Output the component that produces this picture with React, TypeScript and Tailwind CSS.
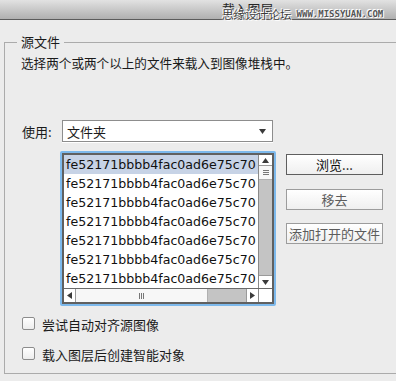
const ROWS = Array.from({ length: 7 }, () => 'fe52171bbbb4fac0ad6e75c70')

const Tri = ({ dir }: { dir: 'up' | 'down' | 'left' | 'right' }) => {
  const pts = {
    up: '0,5 7,5 3.5,0',
    down: '0,0 7,0 3.5,5',
    left: '5,0 5,7 0,3.5',
    right: '0,0 0,7 5,3.5',
  }[dir]
  const vertical = dir === 'up' || dir === 'down'
  return (
    <svg width={vertical ? 7 : 5} height={vertical ? 5 : 7} viewBox={vertical ? '0 0 7 5' : '0 0 5 7'}>
      <polygon points={pts} fill="#3a3a3a" />
    </svg>
  )
}

const VScroll = () => (
  <div className="flex w-[14px] flex-col border-l border-[#8a8a8a] bg-[#c4c4c4]">
    <div className="flex h-[11px] items-center justify-center border-b border-[#9a9a9a] bg-white">
      <Tri dir="up" />
    </div>
    <div className="flex h-[14px] items-center justify-center border-b border-[#b0b0b0] bg-[#f7f7f7]">
      <svg width="6" height="5" viewBox="0 0 6 5">
        <path d="M0 0.5H6M0 2.5H6M0 4.5H6" stroke="#777" strokeWidth="1" />
      </svg>
    </div>
    <div className="flex-1" />
    <div className="flex h-[13px] items-center justify-center border-t border-[#9a9a9a] bg-white">
      <Tri dir="down" />
    </div>
  </div>
)

const HScroll = () => (
  <div className="flex h-[14px] border-t border-[#6a6a6a] bg-[#c4c4c4]">
    <div className="flex w-[12px] items-center justify-center border-r border-[#9a9a9a] bg-white">
      <Tri dir="left" />
    </div>
    <div className="flex w-[132px] items-center justify-center border-r border-[#b0b0b0] bg-[#f7f7f7]">
      <svg width="5" height="6" viewBox="0 0 5 6">
        <path d="M0.5 0V6M2.5 0V6M4.5 0V6" stroke="#777" strokeWidth="1" />
      </svg>
    </div>
    <div className="flex-1" />
    <div className="flex w-[12px] items-center justify-center border-l border-[#9a9a9a] bg-white">
      <Tri dir="right" />
    </div>
    <div className="w-[14px] border-l border-[#8a8a8a] bg-white" />
  </div>
)

const FileList = () => (
  <div className="h-[155px] w-[216px] rounded-[2px] border-2 border-[#7db9ec]">
    <div className="flex h-full flex-col border-2 border-[#606060] bg-white">
      <div className="flex h-[133px]">
        <div className="flex-1 overflow-hidden">
          {ROWS.map((r, i) => (
            <div
              key={i}
              className={`h-[19px] whitespace-nowrap pl-[2px] font-['DejaVu_Sans',sans-serif] text-[12.6px] leading-[19px] text-[#111] ${
                i === 0 ? 'bg-[#c7d3e6]' : ''
              }`}
            >
              {r}
            </div>
          ))}
        </div>
        <VScroll />
      </div>
      <HScroll />
    </div>
  </div>
)

const Button = ({ label, disabled }: { label: string; disabled?: boolean }) => (
  <div
    className={`flex h-[21px] items-center justify-center whitespace-nowrap border bg-linear-to-b from-white to-[#efefef] text-[13px] leading-none ${
      disabled ? 'border-[#9c9c9c] text-[#5c5c5c]' : 'border-[#5e5e5e] text-[#111]'
    }`}
  >
    {label}
  </div>
)

const Check = ({ label }: { label: string }) => (
  <div className="flex h-[13px] items-center pl-[17px]">
    <span className="h-[13px] w-[13px] rounded-[2px] border border-[#8c8c8c] bg-linear-to-b from-white to-[#ededed]" />
    <span className="ml-[7px] pt-[2px] text-[13px] leading-[13px] text-[#1a1a1a]">{label}</span>
  </div>
)

export default function App() {
  return (
    <div className="h-[381px] w-[396px] overflow-hidden bg-[#ececec] font-['Noto_Sans_CJK_SC','Noto_Sans',sans-serif] text-[#1a1a1a]">
      {/* title bar */}
      <div className="relative flex h-[20px] border-b border-[#5c5c5c] bg-linear-to-b from-[#e2e2e2] to-[#b0b0b0] pl-[222px]">
        <span className="text-[12.8px] leading-[18px] text-[#262626]">载入图层</span>
        <div className="absolute left-[222px] top-[7px] flex items-end whitespace-nowrap [text-shadow:0_0_1px_#fff,0_0_2px_#fff,1px_1px_0_#fff,-1px_-1px_0_#fff]">
          <span className="text-[11.6px] leading-[14px] text-[#3a3a3a]">思缘设计论坛</span>
          <span className="ml-[5px] mb-[2px] font-['DejaVu_Sans_Mono',monospace] text-[9px] font-bold leading-[9px] text-[#555]">
            WWW.MISSYUAN.COM
          </span>
        </div>
      </div>

      <fieldset className="ml-[4px] mt-[15px] w-[420px] border border-[#ababab] pb-[13px]">
        <legend className="ml-[12px] px-[4px] text-[13px] leading-[14px]">源文件</legend>
        <p className="mt-[5px] pl-[16px] text-[12.6px] leading-[18px]">选择两个或两个以上的文件来载入到图像堆栈中。</p>

        <div className="mt-[48px] flex items-center pl-[17px]">
          <span className="w-[40px] text-[13px] leading-none">使用:</span>
          <div className="flex h-[22px] w-[211px] items-center justify-between border border-[#8d8d8d] bg-white pl-[4px] pr-[6px] shadow-[0_1px_0_#fff]">
            <span className="text-[13px] leading-none">文件夹</span>
            <Tri dir="down" />
          </div>
        </div>

        <div className="mt-[9px] flex pl-[55px]">
          <FileList />
          <div className="ml-[10px] mt-[3px] flex w-[97px] flex-col">
            <Button label="浏览..." />
            <div className="mt-[14px]">
              <Button label="移去" disabled />
            </div>
            <div className="mt-[13px]">
              <Button label="添加打开的文件" disabled />
            </div>
          </div>
        </div>

        <div className="mt-[11px]">
          <Check label="尝试自动对齐源图像" />
        </div>
        <div className="mt-[17px]">
          <Check label="载入图层后创建智能对象" />
        </div>
      </fieldset>
    </div>
  )
}
